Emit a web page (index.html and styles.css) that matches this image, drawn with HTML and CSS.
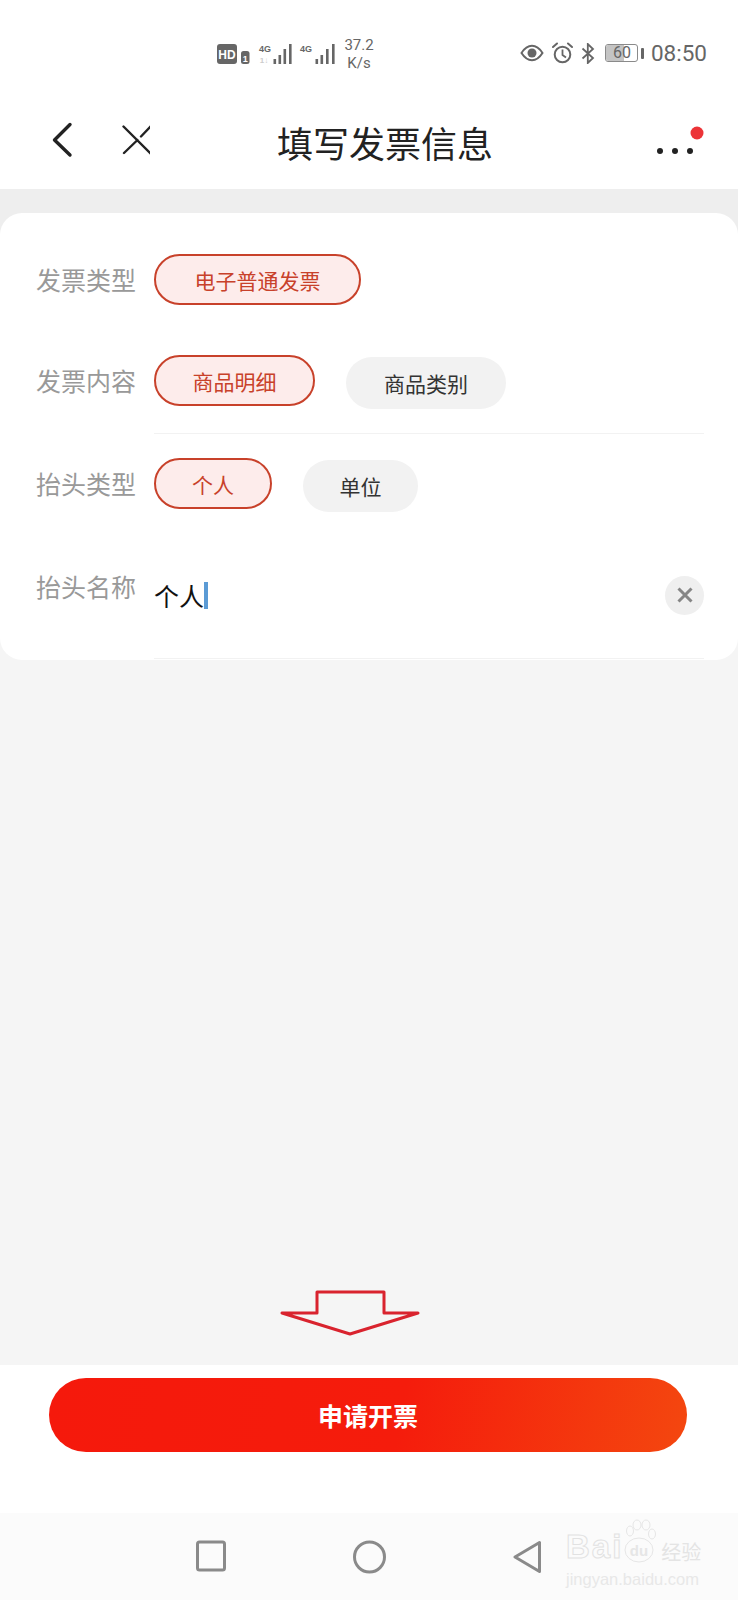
FILE: index.html
```html
<!DOCTYPE html>
<html lang="zh-CN">
<head>
  <meta charset="UTF-8">
  <meta name="viewport" content="width=device-width, initial-scale=1.0">
  <title>填写发票信息</title>
  <link rel="stylesheet" href="styles.css">
</head>
<body>
  <div class="page">

    <div class="status-bar">
      <svg class="signal" width="120" height="26" viewBox="217 40 120 26">
        <rect x="217" y="44" width="20" height="20" rx="3" fill="#666"/>
        <text x="227" y="59" class="hd-text" text-anchor="middle">HD</text>
        <rect x="241" y="51" width="8.5" height="13" rx="2.5" fill="#666"/>
        <text x="245.2" y="61.5" class="sim-text" text-anchor="middle">1</text>
        <text x="265" y="52" class="net-text" text-anchor="middle">4G</text>
        <text x="264" y="63" class="net-faint" text-anchor="middle">1↓</text>
        <rect x="273.5" y="59" width="2.6" height="5" fill="#666"/>
        <rect x="278.5" y="55" width="2.6" height="9" fill="#666"/>
        <rect x="283.5" y="49" width="2.6" height="15" fill="#666"/>
        <rect x="289" y="44" width="2.6" height="20" fill="#666"/>
        <text x="306" y="52" class="net-text" text-anchor="middle">4G</text>
        <rect x="315.5" y="59" width="2.6" height="5" fill="#666"/>
        <rect x="320.5" y="55" width="2.6" height="9" fill="#666"/>
        <rect x="326" y="49" width="2.6" height="15" fill="#666"/>
        <rect x="332" y="44" width="2.6" height="20" fill="#666"/>
      </svg>
      <div class="speed">37.2<br>K/s</div>

      <div class="status-right">
        <svg width="24" height="18" viewBox="0 0 24 18">
          <path d="M1.5 9C5 3.5 8.500 1.800 12 1.800S19 3.500 22.500 9C19 14.500 15.500 16.200 12 16.200S5 14.500 1.500 9Z" fill="none" stroke="#666" stroke-width="2"/>
          <circle cx="12" cy="9" r="4.500" fill="#666"/>
        </svg>
        <svg width="21" height="22" viewBox="0 0 21 22">
          <circle cx="10.500" cy="12.500" r="7.800" fill="none" stroke="#666" stroke-width="2"/>
          <path d="M10.500 7.500V13L14 15.500" fill="none" stroke="#666" stroke-width="1.800"/>
          <path d="M1 5L5 1.500M20 5L16 1.500" stroke="#666" stroke-width="2" stroke-linecap="round"/>
        </svg>
        <svg width="14" height="21" viewBox="0 0 14 21">
          <path d="M1.500 5.500L12 15L6.800 20V1L12 6L1.500 15.500" fill="none" stroke="#666" stroke-width="1.800"/>
        </svg>
        <div class="battery">
          <div class="battery-fill"></div>
          <span class="battery-num">60</span>
        </div>
        <div class="battery-nub"></div>
        <span class="clock">08:50</span>
      </div>
    </div>

    <header class="top-bar">
      <div class="top-left">
        <svg width="100" height="40" viewBox="50 120 100 40">
          <path d="M70 122.500L54.500 138L70 153" fill="none" stroke="#222" stroke-width="3.400" stroke-linecap="round" stroke-linejoin="round"/>
          <path d="M123.500 124.500L150.500 151.500M124 151L137.500 138M141 134.500L150.500 124.500" fill="none" stroke="#222" stroke-width="2.400" stroke-linecap="round"/>
        </svg>
      </div>
      <h1 class="title">填写发票信息</h1>
      <div class="top-right">
        <svg width="54" height="36" viewBox="650 112 54 36">
          <circle cx="660" cy="139" r="3" fill="#222"/>
          <circle cx="675" cy="139" r="3" fill="#222"/>
          <circle cx="690" cy="139" r="3" fill="#222"/>
          <circle cx="697" cy="121" r="6.500" fill="#ec3337"/>
        </svg>
      </div>
    </header>

    <main class="content">
      <section class="card">
        <div class="row row-first">
          <div class="label">发票类型</div>
          <div class="row-body">
            <span class="chip active chip-wide">电子普通发票</span>
          </div>
        </div>

        <div class="row row-second">
          <div class="label">发票内容</div>
          <div class="row-body lined">
            <span class="chip active chip-mid">商品明细</span>
            <span class="chip chip-mid-plain">商品类别</span>
          </div>
        </div>

        <div class="row row-third">
          <div class="label">抬头类型</div>
          <div class="row-body">
            <span class="chip active chip-short">个人</span>
            <span class="chip chip-short-plain">单位</span>
          </div>
        </div>

        <div class="row row-fourth">
          <div class="label">抬头名称</div>
          <div class="row-body lined name-field">
            <span class="name-value">个人</span><span class="caret"></span>
            <span class="clear-btn">
              <svg width="18" height="18" viewBox="0 0 18 18">
                <path d="M2.500 2.500L15.500 15.500M15.500 2.500L2.500 15.500" stroke="#858585" stroke-width="3"/>
              </svg>
            </span>
          </div>
        </div>
      </section>

      <!-- annotation arrow drawn over the screenshot -->
      <svg class="arrow" width="144" height="46" viewBox="279 1290 144 46">
        <path d="M282 1313H317V1292H384V1313H418L350 1334Z" fill="none" stroke="#d9232e" stroke-width="3" stroke-linejoin="round"/>
      </svg>
    </main>

    <div class="footer">
      <div class="submit-btn">申请开票</div>
    </div>

    <nav class="nav-bar">
      <svg width="30" height="32" viewBox="0 0 30 32">
        <rect x="1.500" y="2" width="27" height="28" rx="2" fill="none" stroke="#8a8a8a" stroke-width="3"/>
      </svg>
      <svg width="33" height="34" viewBox="0 0 33 34">
        <circle cx="16.500" cy="17" r="15" fill="none" stroke="#8a8a8a" stroke-width="3"/>
      </svg>
      <svg width="28" height="34" viewBox="0 0 28 34">
        <path d="M26.500 2.500V31.500L2 17Z" fill="none" stroke="#8a8a8a" stroke-width="3" stroke-linejoin="round"/>
      </svg>

      <div class="watermark">
        <div class="wm-top">
          <span class="wm-bai">Bai</span>
          <svg class="wm-paw" width="34" height="46" viewBox="0 0 34 46">
            <ellipse cx="7" cy="12" rx="3.500" ry="5" fill="none" stroke="#e6e6e6"/>
            <ellipse cx="14" cy="6" rx="4" ry="5" fill="none" stroke="#e6e6e6"/>
            <ellipse cx="23" cy="6" rx="4" ry="5" fill="none" stroke="#e6e6e6"/>
            <ellipse cx="29" cy="15" rx="3.500" ry="5" fill="none" stroke="#e6e6e6"/>
            <ellipse cx="16" cy="31" rx="14" ry="12" fill="none" stroke="#e6e6e6"/>
            <text x="16" y="37" class="wm-du" text-anchor="middle">du</text>
          </svg>
          <span class="wm-jy">经验</span>
        </div>
        <div class="wm-url">jingyan.baidu.com</div>
      </div>
    </nav>

  </div>
</body>
</html>
```

FILE: styles.css
```css
body {
  margin: 0;
  font-family: "Noto Sans CJK SC", "Noto Sans", sans-serif;
  background: #fff;
}

.page {
  width: 738px;
  height: 1600px;
  display: flex;
  flex-direction: column;
  overflow: hidden;
}

/* status bar */
.status-bar {
  height: 95px;
  flex-shrink: 0;
  display: flex;
  align-items: flex-start;
  padding: 40px 31px 0 217px;
  box-sizing: border-box;
  color: #666;
}

.signal {
  display: block;
}

.hd-text {
  font: 700 12px "Liberation Sans", sans-serif;
  fill: #fff;
}

.sim-text {
  font: 700 9px "Liberation Sans", sans-serif;
  fill: #fff;
}

.net-text {
  font: 700 9px "Liberation Sans", sans-serif;
  fill: #666;
}

.net-faint {
  font: 700 8px "Liberation Sans", sans-serif;
  fill: #ccc;
}

.speed {
  margin-left: 7px;
  margin-top: -4px;
  width: 30px;
  text-align: center;
  font: 15px/18px Roboto, sans-serif;
  white-space: nowrap;
}

.status-right {
  margin-left: auto;
  display: flex;
  align-items: center;
  height: 26px;
}

.status-right svg {
  display: block;
  margin-right: 8px;
}

.battery {
  position: relative;
  width: 33px;
  height: 18px;
  border: 1px solid #8a8a8a;
  border-radius: 3px;
  box-sizing: border-box;
  margin-left: 2px;
}

.battery-fill {
  width: 18px;
  height: 100%;
  background: #c4c4c4;
  border-radius: 2px 0 0 2px;
}

.battery-num {
  position: absolute;
  left: 7px;
  top: -2px;
  font: 16px/20px Roboto, sans-serif;
  color: #666;
}

.battery-nub {
  width: 3px;
  height: 11px;
  margin-left: 3px;
  background: #666;
  border-radius: 1px;
}

.clock {
  margin-left: 7px;
  font: 22.5px/26px Roboto, sans-serif;
  color: #666;
}

/* top bar */
.top-bar {
  height: 94px;
  flex-shrink: 0;
  display: grid;
  grid-template-columns: 1fr auto 1fr;
  align-items: center;
  box-sizing: border-box;
  padding: 0 34px 0 50px;
}

.top-left svg,
.top-right svg {
  display: block;
}

.top-right {
  display: flex;
  justify-content: flex-end;
}

.title {
  margin: 0;
  font-size: 36px;
  font-weight: 400;
  line-height: 50px;
  color: #222;
  position: relative;
  left: 8px;
}

/* form */
.content {
  flex: 1;
  position: relative;
  padding-top: 24px;
  background: linear-gradient(#eee 44px, #f5f5f5 44px);
}

.card {
  background: #fff;
  border-radius: 22px;
  padding: 41px 34px 1px 36px;
}

.row {
  display: flex;
  align-items: flex-start;
}

.label {
  width: 118px;
  flex-shrink: 0;
  font-size: 25px;
  line-height: 50px;
  color: #999;
}

.row-body {
  flex: 1;
  display: flex;
  align-items: flex-start;
  gap: 31px;
}

.lined {
  border-bottom: 1px solid #f2f2f2;
}

.row-second {
  margin-top: 50px;
}

.row-second .row-body {
  padding-bottom: 24px;
}

.row-third {
  margin-top: 24px;
}

.row-fourth {
  margin-top: 49px;
}

.chip {
  height: 52px;
  border-radius: 26px;
  box-sizing: border-box;
  display: flex;
  align-items: center;
  justify-content: center;
  font-size: 21px;
  color: #333;
  background: #f2f2f2;
  margin-top: 2px;
}

.chip.active {
  height: 51px;
  margin-top: 0;
  color: #c8412a;
  background: #fdeceb;
  border: 2.500px solid #c8412a;
}

.chip-wide {
  width: 207px;
}

.chip-mid {
  width: 161px;
}

.chip-mid-plain {
  width: 160px;
}

.chip-short {
  width: 118px;
}

.chip-short-plain {
  width: 115px;
}

.name-field {
  gap: 0;
  align-items: center;
  height: 68px;
  padding-bottom: 29px;
}

.name-value {
  font-size: 25px;
  color: #111;
}

.caret {
  width: 4px;
  height: 27px;
  background: #5b9bd5;
}

.clear-btn {
  margin-left: auto;
  width: 39px;
  height: 39px;
  border-radius: 50%;
  background: #efefef;
  display: flex;
  align-items: center;
  justify-content: center;
}

.arrow {
  position: absolute;
  left: 279px;
  bottom: 29px;
}

/* bottom */
.footer {
  height: 148px;
  flex-shrink: 0;
  box-sizing: border-box;
  padding: 13px 51px 0 49px;
  background: #fff;
}

.submit-btn {
  height: 74px;
  border-radius: 37px;
  background: linear-gradient(100deg, #f5190c 0%, #f51c0c 55%, #f4470f 100%);
  color: #fff;
  font-size: 25px;
  font-weight: 700;
  display: flex;
  align-items: center;
  justify-content: center;
}

.nav-bar {
  height: 87px;
  flex-shrink: 0;
  position: relative;
  box-sizing: border-box;
  background: #fbfbfb;
  display: flex;
  align-items: flex-start;
  gap: 127px;
  padding: 27px 0 0 196px;
}

.watermark {
  position: absolute;
  left: 566px;
  top: 6px;
  color: #e6e6e6;
}

.wm-top {
  display: flex;
  align-items: flex-end;
  height: 46px;
}

.wm-bai {
  font: 700 33px/36px "Liberation Sans", sans-serif;
  color: #fbfbfb;
  -webkit-text-stroke: 1px #e2e2e2;
  letter-spacing: 2px;
}

.wm-paw {
  margin: 0 4px 0 0;
}

.wm-du {
  font: 700 15px "Liberation Sans", sans-serif;
  fill: #e6e6e6;
}

.wm-jy {
  font-size: 20px;
  line-height: 26px;
  color: #e4e4e4;
}

.wm-url {
  margin-top: 5px;
  font: 16.500px/18px "Liberation Sans", sans-serif;
  color: #e8e8e8;
  white-space: nowrap;
}
```
